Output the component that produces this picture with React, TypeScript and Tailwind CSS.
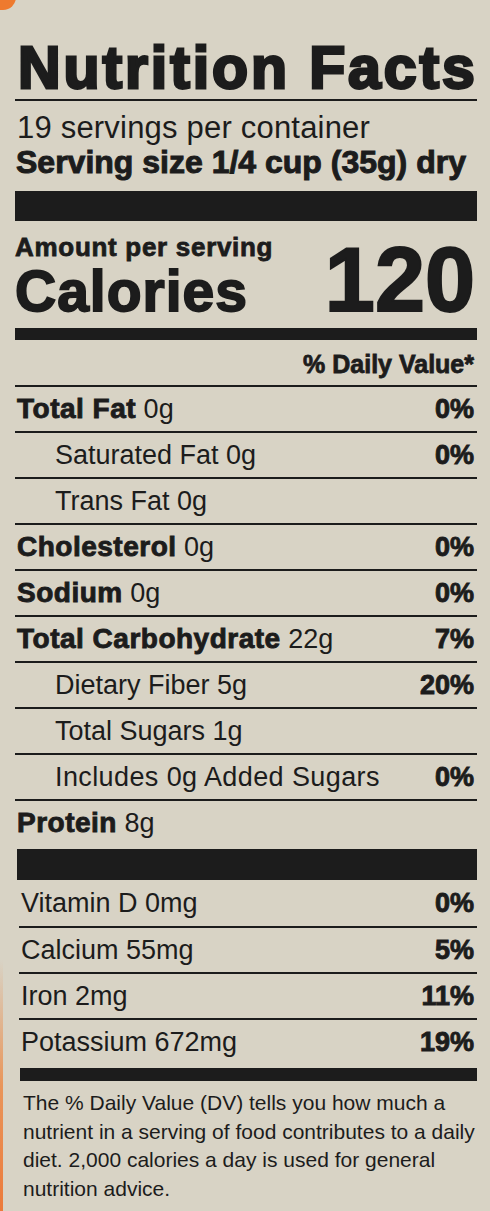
import React from "react";

type Row = { label: string; amt?: string; bold?: boolean; indent?: boolean; dv?: string };

const rows: Row[] = [
  { label: "Total Fat", amt: "0g", bold: true, dv: "0%" },
  { label: "Saturated Fat 0g", indent: true, dv: "0%" },
  { label: "Trans Fat 0g", indent: true },
  { label: "Cholesterol", amt: "0g", bold: true, dv: "0%" },
  { label: "Sodium", amt: "0g", bold: true, dv: "0%" },
  { label: "Total Carbohydrate", amt: "22g", bold: true, dv: "7%" },
  { label: "Dietary Fiber 5g", indent: true, dv: "20%" },
  { label: "Total Sugars 1g", indent: true },
  { label: "Includes 0g Added Sugars", indent: true, dv: "0%" },
  { label: "Protein", amt: "8g", bold: true },
];

const minerals: { label: string; dv: string }[] = [
  { label: "Vitamin D 0mg", dv: "0%" },
  { label: "Calcium 55mg", dv: "5%" },
  { label: "Iron 2mg", dv: "11%" },
  { label: "Potassium 672mg", dv: "19%" },
];

export default function App() {
  return (
    <div className="relative w-[490px] h-[1211px] overflow-hidden bg-[#d8d3c5] text-[#1c1c1c] font-['Liberation_Sans',Arial,sans-serif]">
      {/* orange packaging edges */}
      <div className="absolute left-[-14px] top-[-16px] w-[30px] h-[26px] rounded-full bg-[#ee7a2e]" />
      <div className="absolute left-0 top-[960px] bottom-0 w-[3px] bg-gradient-to-b from-transparent via-[#e9955a] to-[#ec7a3a]" />

      <div className="flex flex-col pl-[15px] pr-[13px] pt-[38px]">
        <div className="h-[60px] leading-[60px] text-[59px] font-bold tracking-[2.9px] whitespace-nowrap [-webkit-text-stroke:2.8px_#1c1c1c] pl-[3px]">
          Nutrition Facts
        </div>
        <div className="h-[2px] mt-[1px] bg-[#1c1c1c]" />
        <div className="mt-[10px] h-[33px] leading-[33px] text-[31px] tracking-[0.2px] pl-[2px] whitespace-nowrap">
          19 servings per container
        </div>
        <div className="h-[36px] leading-[36px] text-[32px] font-bold pl-[1px] whitespace-nowrap [-webkit-text-stroke:1px_#1c1c1c]">
          Serving size 1/4 cup (35g) dry
        </div>
        <div className="mt-[11px] h-[30px] bg-[#1c1c1c]" />

        <div className="mt-[12px] flex items-end justify-between">
          <div className="flex flex-col">
            <div className="h-[28px] leading-[28px] text-[26px] font-bold tracking-[0.7px] whitespace-nowrap [-webkit-text-stroke:0.8px_#1c1c1c]">
              Amount per serving
            </div>
            <div className="h-[60px] leading-[60px] text-[57px] font-bold tracking-[1px] whitespace-nowrap [-webkit-text-stroke:1.8px_#1c1c1c]">
              Calories
            </div>
          </div>
          <div className="h-[82px] leading-[82px] text-[90px] font-bold pr-[2px] [-webkit-text-stroke:2px_#1c1c1c]">
            120
          </div>
        </div>
        <div className="mt-[7px] h-[12px] bg-[#1c1c1c]" />

        <div className="mt-[9px] h-[30px] leading-[30px] text-[25px] font-bold text-right pr-[3px] whitespace-nowrap [-webkit-text-stroke:0.8px_#1c1c1c]">
          % Daily Value*
        </div>

        <div className="mt-[6px] flex flex-col">
          {rows.map((r, i) => (
            <div
              key={i}
              className="flex h-[46px] items-center justify-between border-t-2 border-[#1c1c1c] text-[27px] leading-[44px] whitespace-nowrap"
            >
              <div className={r.indent ? "pl-[40px]" : "pl-[2px]"}>
                {r.bold ? (
                  <>
                    <span className="font-bold text-[28px] tracking-[0.5px] [-webkit-text-stroke:0.9px_#1c1c1c]">{r.label}</span>
                    <span> {r.amt}</span>
                  </>
                ) : (
                  <span className={r.label.startsWith("Includes") ? "tracking-[0.4px]" : ""}>{r.label}</span>
                )}
              </div>
              {r.dv ? (
                <div className="pr-[3px] font-bold [-webkit-text-stroke:0.9px_#1c1c1c]">{r.dv}</div>
              ) : null}
            </div>
          ))}
        </div>

        <div className="mt-[4px] h-[31px] bg-[#1c1c1c] ml-[2px]" />

        <div className="flex flex-col pl-[4px]">
          {minerals.map((m, i) => (
            <div
              key={i}
              className={
                i === 0
                  ? "flex h-[46px] items-center justify-between text-[27px] leading-[46px] whitespace-nowrap"
                  : "flex h-[46px] items-center justify-between border-t-2 border-[#1c1c1c] text-[27px] leading-[44px] whitespace-nowrap"
              }
            >
              <div className="pl-[2px]">{m.label}</div>
              <div className="pr-[3px] font-bold [-webkit-text-stroke:0.9px_#1c1c1c]">{m.dv}</div>
            </div>
          ))}
        </div>

        <div className="mt-[4px] h-[13px] bg-[#1c1c1c] ml-[5px]" />

        <div className="mt-[8px] pl-[8px] text-[21px] leading-[28.5px] whitespace-nowrap">
          <div>The % Daily Value (DV) tells you how much a</div>
          <div>nutrient in a serving of food contributes to a daily</div>
          <div>diet. 2,000 calories a day is used for general</div>
          <div>nutrition advice.</div>
        </div>
      </div>
    </div>
  );
}
